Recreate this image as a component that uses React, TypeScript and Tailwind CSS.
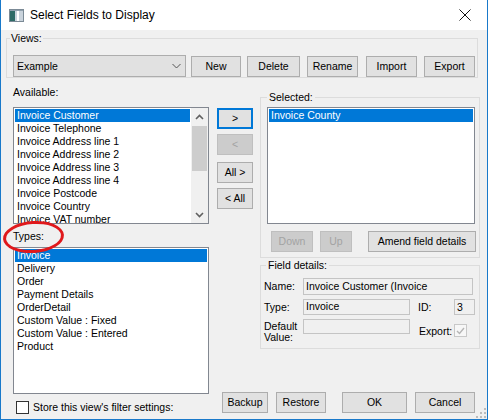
import React from "react";

const available = [
  "Invoice Customer",
  "Invoice Telephone",
  "Invoice Address line 1",
  "Invoice Address line 2",
  "Invoice Address line 3",
  "Invoice Address line 4",
  "Invoice Postcode",
  "Invoice Country",
  "Invoice VAT number",
];

const types = [
  "Invoice",
  "Delivery",
  "Order",
  "Payment Details",
  "OrderDetail",
  "Custom Value : Fixed",
  "Custom Value : Entered",
  "Product",
];

function Btn({
  children,
  className = "",
  disabled,
  focused,
}: {
  children: React.ReactNode;
  className?: string;
  disabled?: boolean;
  focused?: boolean;
}) {
  const look = disabled
    ? "border border-[#bfbfbf] bg-[#cccccc] text-[#a3a3a3]"
    : focused
      ? "border-2 border-[#0078d7] bg-[#e1e1e1]"
      : "border border-[#adadad] bg-[#e1e1e1]";
  return (
    <div className={`flex h-[21px] shrink-0 items-center justify-center whitespace-nowrap ${look} ${className}`}>
      {children}
    </div>
  );
}

function Chevron({ up }: { up?: boolean }) {
  return (
    <svg width="9" height="6" viewBox="0 0 9 6">
      <path
        d={up ? "M1 5 L4.5 1.5 L8 5" : "M1 1 L4.5 4.5 L8 1"}
        fill="none"
        stroke="#606060"
        strokeWidth="1.6"
      />
    </svg>
  );
}

function ListBox({
  items,
  className,
  scroll,
}: {
  items: string[];
  className: string;
  scroll?: boolean;
}) {
  return (
    <div className={`flex shrink-0 overflow-hidden border border-[#828790] bg-white ${className}`}>
      <div className="flex-1 overflow-hidden p-[1px]">
        {items.map((t, i) => (
          <div
            key={t}
            className={`h-[13px] whitespace-nowrap pl-[2px] leading-[13px] ${i === 0 ? "bg-[#0078d7] text-white" : ""}`}
          >
            {t}
          </div>
        ))}
      </div>
      {scroll && (
        <div className="flex w-[17px] shrink-0 flex-col bg-[#f0f0f0]">
          <div className="flex h-[17px] items-center justify-center">
            <Chevron up />
          </div>
          <div className="flex-1 px-[1px] pt-[1px]">
            <div className="h-[45px] bg-[#cdcdcd]" />
          </div>
          <div className="flex h-[17px] items-center justify-center">
            <Chevron />
          </div>
        </div>
      )}
    </div>
  );
}

function ReadBox({ children, className }: { children?: React.ReactNode; className: string }) {
  return (
    <div className={`shrink-0 overflow-hidden border border-[#c4c4c4] bg-[#f0f0f0] pl-[2px] ${className}`}>
      {children}
    </div>
  );
}

export default function App() {
  return (
    <div className="relative flex h-[420px] w-[488px] flex-col overflow-hidden border-x border-b border-[#1979ca] bg-[#f0f0f0] font-['Liberation_Sans',Arial,sans-serif] text-[10.5px] leading-[13px] text-black">
      {/* title bar */}
      <div className="flex h-[30px] shrink-0 items-center bg-white">
        <svg className="ml-[8px]" width="15" height="13" viewBox="0 0 15 13">
          <rect x="0.5" y="0.5" width="14" height="12" fill="#c9d3dc" stroke="#7b8a96" />
          <rect x="1" y="2" width="5" height="10" fill="#2e6b67" />
          <rect x="8" y="2" width="2" height="10" fill="#ffffff" />
          <rect x="1" y="1" width="13" height="1" fill="#8fa0ad" />
        </svg>
        <span className="ml-[6px] text-[12px]">Select Fields to Display</span>
        <svg className="ml-auto mr-[16px]" width="12" height="12" viewBox="0 0 12 12">
          <path d="M0.5 0.5 L11.5 11.5 M11.5 0.5 L0.5 11.5" stroke="#111" strokeWidth="1" />
        </svg>
      </div>

      <div className="flex flex-1 flex-col">
        {/* views */}
        <fieldset className="ml-[5px] mt-[2px] w-[472px] shrink-0 border border-[#dcdcdc] pl-[6px] pt-[10px]">
          <legend className="-ml-[3px] px-[1px] leading-[13px]">Views:</legend>
          <div className="flex items-center">
            <div className="flex h-[22px] w-[173px] shrink-0 items-center border border-[#adadad] bg-[#e1e1e1] pl-[3px]">
              <span>Example</span>
              <svg className="ml-auto mr-[4px]" width="9" height="6" viewBox="0 0 9 6">
                <path d="M0.5 1 L4.5 5 L8.5 1" fill="none" stroke="#555" strokeWidth="1" />
              </svg>
            </div>
            <Btn className="ml-[5px] w-[50px]">New</Btn>
            <Btn className="ml-[6px] w-[53px]">Delete</Btn>
            <Btn className="ml-[7px] w-[51px]">Rename</Btn>
            <Btn className="ml-[8px] w-[51px]">Import</Btn>
            <Btn className="ml-[7px] w-[51px]">Export</Btn>
          </div>
        </fieldset>

        <div className="flex flex-1">
          {/* left column */}
          <div className="ml-[12px] flex w-[196px] shrink-0 flex-col">
            <div className="mt-[8px]">Available:</div>
            <ListBox items={available} scroll className="mt-[8px] h-[117px] w-[196px]" />
            <div className="mt-[6px]">Types:</div>
            <ListBox items={types} className="mt-[4px] h-[147px] w-[196px]" />
            <div className="mt-[7px] flex items-center">
              <div className="ml-[3px] h-[13px] w-[13px] border border-[#333] bg-white" />
              <span className="ml-[4px]">Store this view's filter settings:</span>
            </div>
          </div>

          {/* middle + right */}
          <div className="ml-[8px] flex flex-1 flex-col">
            <div className="flex">
              <div className="flex w-[36px] shrink-0 flex-col pt-[30px]">
                <Btn focused className="w-[36px]">&gt;</Btn>
                <Btn disabled className="mt-[5px] w-[36px]">&lt;</Btn>
                <Btn className="mt-[7px] w-[36px]">All &gt;</Btn>
                <Btn className="mt-[5px] w-[36px]">&lt; All</Btn>
              </div>

              <div className="ml-[7px] flex w-[220px] shrink-0 flex-col">
                <fieldset className="mt-[13px] border border-[#dcdcdc] pb-[5px] pl-[6px] pt-[3px]">
                  <legend className="px-[2px] leading-[13px]">Selected:</legend>
                  <ListBox items={["Invoice County"]} className="h-[117px] w-[208px]" />
                  <div className="mt-[7px] flex">
                    <Btn disabled className="ml-[4px] w-[42px]">Down</Btn>
                    <Btn disabled className="ml-[7px] w-[32px]">Up</Btn>
                    <Btn className="ml-[16px] w-[108px]">Amend field details</Btn>
                  </div>
                </fieldset>

                <fieldset className="mt-[1px] border border-[#dcdcdc] pb-[5px] pl-[3px] pt-[6px]">
                  <legend className="ml-[2px] px-[2px] leading-[13px]">Field details:</legend>
                  <div className="flex items-center">
                    <span className="w-[39px] shrink-0">Name:</span>
                    <ReadBox className="h-[17px] w-[170px] pt-[1px] leading-[12px]">
                      Invoice Customer (Invoice
                      <br />
                      County)
                    </ReadBox>
                  </div>
                  <div className="mt-[4px] flex items-center">
                    <span className="w-[39px] shrink-0">Type:</span>
                    <ReadBox className="h-[16px] w-[107px] leading-[13px]">Invoice</ReadBox>
                    <span className="ml-[8px] w-[36px] shrink-0">ID:</span>
                    <ReadBox className="h-[16px] w-[21px] leading-[14px]">3</ReadBox>
                  </div>
                  <div className="mt-[4px] flex items-start">
                    <span className="mt-[2px] w-[39px] shrink-0 leading-[11px]">
                      Default
                      <br />
                      Value:
                    </span>
                    <ReadBox className="h-[15px] w-[107px]" />
                    <span className="ml-[9px] mt-[6px] w-[35px] shrink-0">Export:</span>
                    <div className="mt-[5px] flex h-[13px] w-[13px] items-center justify-center border border-[#c8c8c8] bg-[#f7f7f7]">
                      <svg width="9" height="8" viewBox="0 0 9 8">
                        <path d="M1 4 L3.5 6.5 L8 1" fill="none" stroke="#b5b5b5" strokeWidth="1.4" />
                      </svg>
                    </div>
                  </div>
                </fieldset>
              </div>
            </div>

            <div className="mb-[6px] mt-auto flex">
              <Btn className="ml-[5px] w-[46px]">Backup</Btn>
              <Btn className="ml-[8px] w-[50px]">Restore</Btn>
              <Btn className="ml-[16px] w-[65px]">OK</Btn>
              <Btn className="ml-[8px] w-[60px]">Cancel</Btn>
            </div>
          </div>
        </div>
      </div>

      {/* annotation round the Types label */}
      <div className="pointer-events-none absolute left-[2px] top-[221px] h-[32px] w-[61px] -rotate-[4deg] rounded-[50%] border-[3px] border-[#e0191c]" />

      {/* size grip */}
      <svg className="absolute bottom-[1px] right-[1px]" width="10" height="10" viewBox="0 0 10 10">
        <g fill="#bcbcbc">
          <rect x="8" y="0" width="2" height="2" />
          <rect x="4" y="4" width="2" height="2" />
          <rect x="8" y="4" width="2" height="2" />
          <rect x="0" y="8" width="2" height="2" />
          <rect x="4" y="8" width="2" height="2" />
          <rect x="8" y="8" width="2" height="2" />
        </g>
      </svg>
    </div>
  );
}
